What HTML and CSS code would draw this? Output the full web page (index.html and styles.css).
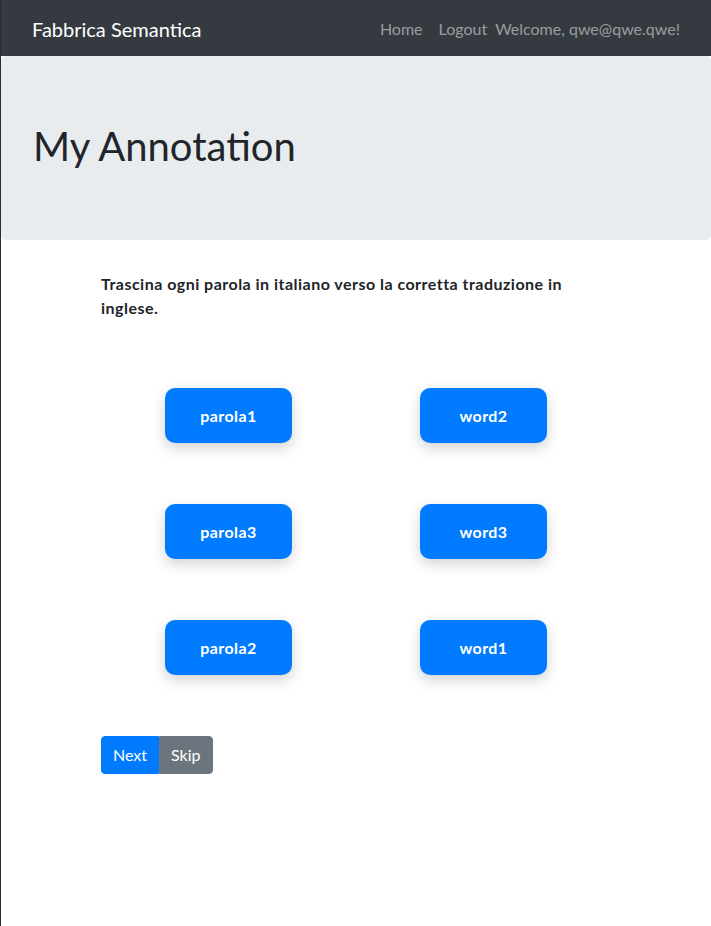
FILE: index.html
```html
<!DOCTYPE html>
<html lang="it">
<head>
<meta charset="utf-8">
<title>Fabbrica Semantica</title>
<link rel="stylesheet" href="styles.css">
</head>
<body>
<nav class="navbar">
  <div class="navbar-inner">
    <a class="brand" href="#">Fabbrica Semantica</a>
    <div class="nav-right">
      <a class="nav-link" href="#">Home</a>
      <a class="nav-link" href="#">Logout</a>
      <span class="welcome">Welcome, qwe@qwe.qwe!</span>
    </div>
  </div>
</nav>
<header class="jumbotron">
  <h1 class="title">My Annotation</h1>
</header>
<main class="container">
  <p class="instructions">Trascina ogni parola in italiano verso la corretta traduzione in inglese.</p>
  <div class="pairs">
    <div class="cell"><div class="word">parola1</div></div>
    <div class="cell"><div class="word">word2</div></div>
    <div class="cell"><div class="word">parola3</div></div>
    <div class="cell"><div class="word">word3</div></div>
    <div class="cell"><div class="word">parola2</div></div>
    <div class="cell"><div class="word">word1</div></div>
  </div>
  <div class="btn-group">
    <button class="btn btn-primary" type="button">Next</button>
    <button class="btn btn-secondary" type="button">Skip</button>
  </div>
</main>
</body>
</html>
```

FILE: styles.css
```css
* { box-sizing: border-box; }

html, body {
  margin: 0;
  padding: 0;
}

body {
  font-family: Lato, "Liberation Sans", sans-serif;
  font-size: 16px;
  line-height: 1.5;
  color: #212529;
  background: #fff;
  border-left: 1px solid #2a2d30;
  min-height: 926px;
}

.navbar {
  background: #343a40;
  height: 56px;
  padding: 9px 16px 7px;
}

.navbar-inner {
  display: flex;
  align-items: center;
  justify-content: space-between;
  height: 40px;
  padding: 0 15px;
}

.brand {
  color: #fff;
  font-size: 20px;
  line-height: 30px;
  text-decoration: none;
}

.nav-right {
  display: flex;
  align-items: center;
}

.nav-link {
  color: rgba(255, 255, 255, 0.5);
  text-decoration: none;
  padding: 8px;
}

.welcome {
  color: rgba(255, 255, 255, 0.5);
}

.jumbotron {
  background: #e9ecef;
  border-radius: 4.8px;
  padding: 66px 32px 62px;
  margin-bottom: 32px;
}

.title {
  margin: 0 0 8px;
  font-size: 40px;
  line-height: 48px;
  font-weight: 400;
}

.container {
  width: 540px;
  margin: 0 auto;
  padding: 0 15px;
}

.instructions {
  margin: 0 0 16px;
  font-weight: 700;
  letter-spacing: 0.48px;
  padding-right: 20px;
}

.pairs {
  display: grid;
  grid-template-columns: 1fr 1fr;
  row-gap: 61px;
  margin-top: 68px;
}

.cell {
  display: flex;
  justify-content: center;
}

.word {
  width: 127px;
  height: 55px;
  display: flex;
  align-items: center;
  justify-content: center;
  background: #007bff;
  color: #fff;
  font-weight: 700;
  letter-spacing: 0.4px;
  border-radius: 10px;
  box-shadow: 0 5px 14px rgba(0, 0, 0, 0.18);
}

.btn-group {
  display: inline-flex;
  margin-top: 61px;
}

.btn {
  font-family: inherit;
  font-size: 16px;
  line-height: 24px;
  padding: 6px 11px;
  border: 1px solid transparent;
  color: #fff;
  cursor: pointer;
}

.btn-primary {
  background: #007bff;
  border-color: #007bff;
  border-radius: 4px 0 0 4px;
}

.btn-secondary {
  background: #6c757d;
  border-color: #6c757d;
  border-radius: 0 4px 4px 0;
}
```
